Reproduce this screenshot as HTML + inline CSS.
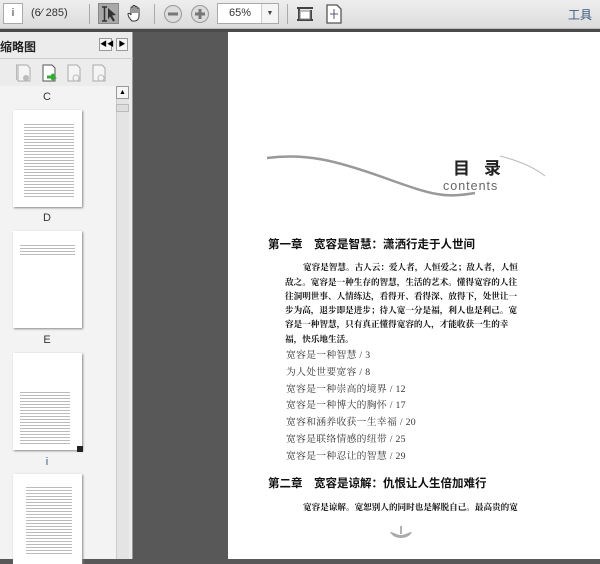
<!DOCTYPE html>
<html><head><meta charset="utf-8"><style>
*{margin:0;padding:0;box-sizing:border-box}
body{width:600px;height:559px;overflow:hidden;background:#585858;font-family:"Liberation Sans","Noto Sans CJK SC",sans-serif;position:relative}
.abs{position:absolute}
#tb{left:0;top:0;width:600px;height:29px;background:linear-gradient(#eeeeee,#dcdcdc);border-bottom:1px solid #bbb}
#tbl{left:0;top:29px;width:600px;height:3px;background:#4a4a4a}
#side{left:0;top:32px;width:133px;height:527px;background:#ececec;border-right:1px solid #999}
.sep{width:1px;height:20px;background:#aaa;top:4px}
#page{left:228px;top:32px;width:372px;height:527px;background:#fff}
.serif{font-family:"Liberation Serif","Noto Serif CJK SC",serif;color:#222}
.h{font-weight:bold;font-size:11.5px;color:#111;font-family:"Liberation Sans","Noto Sans CJK SC",sans-serif}
.pl{position:absolute;left:285px;font-size:8.6px;white-space:nowrap;font-family:"Liberation Serif","Noto Serif CJK SC",serif;color:#111;line-height:12px;font-weight:bold}
.e{font-size:9.8px;color:#333;letter-spacing:0.3px}
.thumb{background:#fff;box-shadow:1px 1px 2px #888;left:13px;width:69px}
.tl{font-size:10px;color:#333;left:0;width:94px;text-align:center}
</style></head><body>
<div id="tb" class="abs"></div>
<div id="tbl" class="abs"></div>
<div class="abs" style="left:3px;top:3px;width:20px;height:21px;background:#fff;border:1px solid #aaa;font-size:11px;text-align:center;line-height:19px;color:#333">i</div>
<div class="abs" style="left:31px;top:7px;font-size:11px;color:#333">(6⁄ 285)</div>
<div class="abs sep" style="left:89px"></div>
<div class="abs" style="left:98px;top:3px;width:21px;height:21px;background:#a9a9a9;border:1px solid #888"></div>
<svg class="abs" style="left:100px;top:5px" width="18" height="18"><path d="M2 2h5M4.5 2v14M2 16h5" stroke="#333" stroke-width="1.5" fill="none"/><path d="M8 3l8 7-4 .5 3 5-2 1-3-5-2 3z" fill="#333"/></svg>
<svg class="abs" style="left:126px;top:4px" width="20" height="20"><path d="M6 17c-2-2-4-5-4-7 0-1 2-1 3 1V4c0-1.5 2-1.5 2 0v5V2.5c0-1.5 2-1.5 2 0V9V3.5c0-1.5 2-1.5 2 0V9V5c0-1.5 2-1.5 2 0v7c0 3-2 5-4 5z" fill="#fff" stroke="#333" stroke-width="1"/></svg>
<div class="abs sep" style="left:154px"></div>
<svg class="abs" style="left:163px;top:4px" width="20" height="20"><circle cx="10" cy="10" r="8.5" fill="#ddd" stroke="#999"/><rect x="5" y="8.5" width="10" height="3" fill="#777"/></svg>
<svg class="abs" style="left:190px;top:4px" width="20" height="20"><circle cx="10" cy="10" r="8.5" fill="#ddd" stroke="#999"/><rect x="5" y="8.5" width="10" height="3" fill="#777"/><rect x="8.5" y="5" width="3" height="10" fill="#777"/></svg>
<div class="abs" style="left:217px;top:3px;width:62px;height:21px;background:#fff;border:1px solid #aaa;font-size:11px;line-height:19px;padding-left:11px;color:#333">65%</div>
<div class="abs" style="left:261px;top:4px;width:17px;height:19px;border-left:1px solid #ccc;background:#f4f4f4;font-size:7px;text-align:center;line-height:19px;color:#444">▼</div>
<div class="abs sep" style="left:287px"></div>
<svg class="abs" style="left:296px;top:4px" width="18" height="20"><path d="M1 4h16M1 16h16M3 4v12M15 6v10" stroke="#444" stroke-width="2" fill="none"/><rect x="4" y="7" width="10" height="8" fill="#fff" stroke="#888"/></svg>
<svg class="abs" style="left:326px;top:4px" width="16" height="20"><path d="M1 1h10l4 4v14H1z" fill="#fff" stroke="#555" stroke-width="1.3"/><path d="M8 5v10M4 10h8" stroke="#557" stroke-width="1"/></svg>
<div class="abs" style="left:568px;top:6px;font-size:12px;color:#3b5a80">工具</div>

<div id="side" class="abs"></div>
<div class="abs" style="left:0;top:38px;font-size:12px;font-weight:bold;color:#222">缩略图</div>
<div class="abs" style="left:99px;top:38px;width:13px;height:13px;border:1px solid #999;background:#f5f5f5;font-size:7px;text-align:center;line-height:11px">◀◀</div>
<div class="abs" style="left:116px;top:38px;width:12px;height:13px;border:1px solid #999;background:#f5f5f5;font-size:7px;text-align:center;line-height:11px">▶</div>
<div class="abs" style="left:0;top:58px;width:133px;height:1px;background:#ccc"></div>
<div class="abs" style="left:16px;top:64px;width:1px;height:16px;background:#bbb"></div>
<svg class="abs" style="left:14px;top:63px" width="110" height="20"><g fill="#f4f4f4" stroke="#aaa"><path d="M4 2h9l3 3v13H4z"/><path d="M54 2h9l3 3v13H54z"/><path d="M79 2h9l3 3v13H79z"/></g><path d="M29 2h9l3 3v13H29z" fill="#fff" stroke="#555"/><path d="M33 14h7l-2-3m2 3l-2 3" stroke="#3a3" stroke-width="3" fill="none"/><circle cx="12" cy="15" r="3" fill="#bbb"/><circle cx="62" cy="15" r="3" fill="none" stroke="#bbb"/><circle cx="87" cy="15" r="3" fill="none" stroke="#bbb"/></svg>
<div class="abs" style="left:0;top:86px;width:116px;height:473px;background:#f3f3f3"></div>
<div class="abs" style="left:116px;top:86px;width:13px;height:473px;background:#e4e4e4;border-left:1px solid #ccc"></div>
<div class="abs" style="left:116px;top:86px;width:13px;height:13px;background:#f5f5f5;border:1px solid #999;font-size:7px;text-align:center;line-height:12px">▲</div>
<div class="abs" style="left:116px;top:104px;width:13px;height:8px;background:#ddd;border:1px solid #bbb"></div>

<div class="abs tl" style="top:91px;font-size:11px">C</div>
<div class="abs thumb" style="top:110px;height:97px"></div>
<div class="abs" style="left:24px;top:122px;width:50px;height:75px;background:repeating-linear-gradient(#fff 0 2px,#bbb 2px 3px)"></div>
<div class="abs tl" style="top:212px;font-size:11px">D</div>
<div class="abs thumb" style="top:231px;height:97px"></div>
<div class="abs" style="left:20px;top:243px;width:55px;height:14px;background:repeating-linear-gradient(#fff 0 2px,#bbb 2px 3px)"></div>
<div class="abs tl" style="top:334px;font-size:11px">E</div>
<div class="abs thumb" style="top:353px;height:97px"></div>
<div class="abs" style="left:20px;top:390px;width:50px;height:55px;background:repeating-linear-gradient(#fff 0 2px,#bbb 2px 3px)"></div>
<div class="abs" style="left:77px;top:446px;width:6px;height:6px;background:#222"></div>
<div class="abs tl" style="top:456px;font-size:11px;color:#3b5a80">i</div>
<div class="abs thumb" style="top:474px;height:90px"></div>
<div class="abs" style="left:26px;top:485px;width:46px;height:70px;background:repeating-linear-gradient(#fff 0 2px,#bbb 2px 3px)"></div>

<div id="page" class="abs"></div>
<svg class="abs" style="left:265px;top:148px" width="285" height="70"><path d="M2 10C40 5 70 12 120 30S180 50 210 45" stroke="#999" stroke-width="2.5" fill="none"/><path d="M235 8c20 5 35 12 45 20" stroke="#bbb" stroke-width="1" fill="none"/></svg>
<div class="abs" style="left:453px;top:159px;font-size:17px;font-weight:bold;color:#222;letter-spacing:14px;line-height:20px">目录</div>
<div class="abs" style="left:443px;top:180px;font-size:12.5px;color:#666;letter-spacing:1px;line-height:13px">contents</div>

<div class="abs h" style="left:268px;top:236px">第一章　宽容是智慧：潇洒行走于人世间</div>
<div class="pl" style="left:303px;top:261px">宽容是智慧。古人云：爱人者，人恒爱之；敌人者，人恒</div>
<div class="pl" style="top:275.5px">敌之。宽容是一种生存的智慧，生活的艺术。懂得宽容的人往</div>
<div class="pl" style="top:290px">往洞明世事、人情练达，看得开、看得深、放得下，处世让一</div>
<div class="pl" style="top:304px">步为高，退步即是进步；待人宽一分是福，利人也是利己。宽</div>
<div class="pl" style="top:318px">容是一种智慧，只有真正懂得宽容的人，才能收获一生的幸</div>
<div class="pl" style="top:333px">福，快乐地生活。</div>
<div class="abs serif e" style="left:286px;top:348px;line-height:16.8px">宽容是一种智慧 / 3<br>为人处世要宽容 / 8<br>宽容是一种崇高的境界 / 12<br>宽容是一种博大的胸怀 / 17<br>宽容和涵养收获一生幸福 / 20<br>宽容是联络情感的纽带 / 25<br>宽容是一种忍让的智慧 / 29</div>
<div class="abs h" style="left:268px;top:475px">第二章　宽容是谅解：仇恨让人生倍加难行</div>
<div class="pl" style="left:303px;top:501px">宽容是谅解。宽恕别人的同时也是解脱自己。最高贵的宽</div>
<svg class="abs" style="left:388px;top:522px" width="26" height="18"><path d="M2 10c4 0 6 3 11 3s7-3 11-3c-2 4-6 6-11 6S4 14 2 10z" fill="#aaa"/><path d="M13 4v8" stroke="#666"/></svg>
</body></html>
